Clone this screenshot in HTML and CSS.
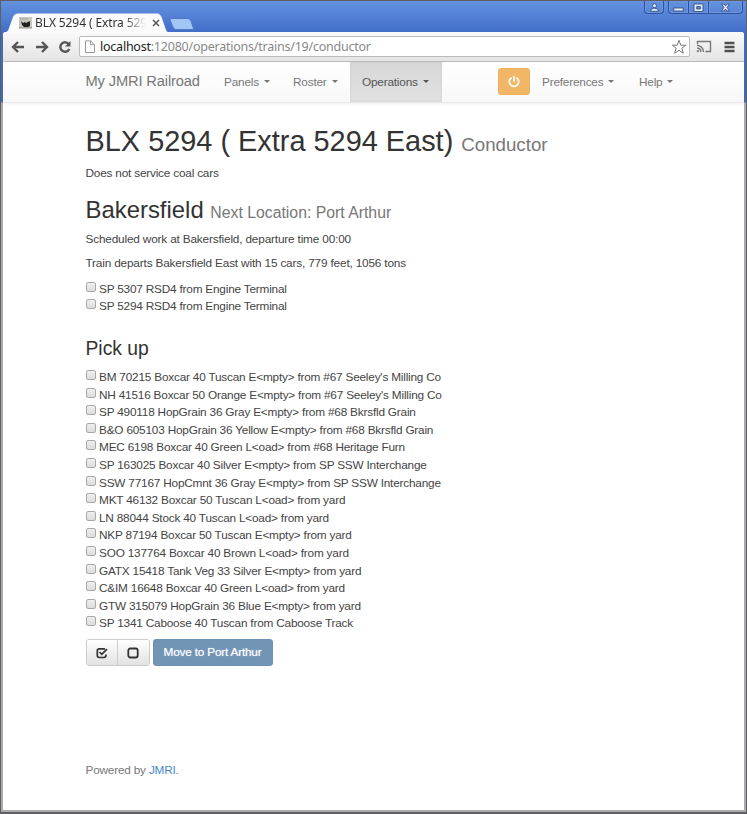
FILE: index.html
```
<!DOCTYPE html>
<html lang="en">
<head>
<meta charset="utf-8">
<title>BLX 5294 ( Extra 5294 East)</title>
<link rel="stylesheet" href="styles.css">
</head>
<body>
<div class="window">
  <div class="titlebar">
    <div class="tabs">
      <div class="tab">
        <svg class="tab-shape" width="162" height="20" viewBox="0 0 162 20"><path d="M0 20C3 19 4 18 5 15L9 4Q10.500 .5 14 .5H153Q156 .5 157.500 4L162 17Q163 19 165 20Z" fill="#fbfbfb"/></svg>
        <svg class="favicon" width="13" height="12" viewBox="0 0 13 12"><rect width="13" height="12" fill="#c9c7c0"/><path d="M2 4l2 2 2-1 1 1 4-2v5l-2 1H5L3 8z" fill="#222"/><path d="M0 10.500h13M1 2h8" stroke="#a5a39d"/></svg>
        <span class="tab-title">BLX 5294 ( Extra 529</span>
        <svg class="tab-close" width="8" height="8" viewBox="0 0 8 8"><path d="M1 1l6 6M7 1L1 7" stroke="#555" stroke-width="1.500"/></svg>
      </div>
      <svg class="newtab" width="27" height="14" viewBox="0 0 27 14"><path d="M3 1.500H20Q22 1.500 23 4L25.500 11.500Q25.500 12.500 24 12.500H8Q6 12.500 5 10L2 3Q2 1.500 3 1.500Z" fill="#a1c5f4" stroke="#4e7bc9"/></svg>
    </div>
    <div class="controls">
      <div class="ctl user"><svg width="9" height="9" viewBox="0 0 9 9"><circle cx="4.500" cy="2.700" r="2"/><path d="M.8 8.300V6.800Q4.500 3.500 8.200 6.800V8.300Z"/></svg></div>
      <div class="ctl min"><svg width="11" height="9" viewBox="0 0 11 9"><rect x=".8" y="5" width="9.400" height="3"/></svg></div>
      <div class="ctl max"><svg width="11" height="9" viewBox="0 0 11 9"><path fill-rule="evenodd" d="M1 1h9v7.500H1zM3.700 3.500h3.600v2.500H3.700z"/></svg></div>
      <div class="ctl close"><svg width="11" height="9" viewBox="0 0 11 9"><path d="M1.500 1h2.500l1.500 2L7 1h2.500L7 4.500 9.500 8H7L5.500 6 4 8H1.500L4 4.500z"/></svg></div>
    </div>
  </div>
  <div class="frame">
    <div class="toolbar">
      <svg class="nav-icon" width="14" height="14" viewBox="0 0 14 14"><path d="M13 7H2.500M7 2L2 7l5 5" /></svg>
      <svg class="nav-icon" width="14" height="14" viewBox="0 0 14 14"><path d="M1 7h10.500M7 2l5 5-5 5" /></svg>
      <svg class="nav-icon reload" width="14" height="14" viewBox="0 0 14 14"><path d="M11 4.500A4.700 4.700 0 1 0 11.300 9" /><path d="M12.500 1v5.500H7z" class="solid"/></svg>
      <div class="address">
        <svg width="10" height="13" viewBox="0 0 10 13"><path d="M.5 .9h5l4 3.800v7.800h-9zM5.500 .9V4.700h4" fill="#fff" stroke="#999"/></svg>
        <span class="url"><b>localhost</b>:12080/operations/trains/19/conductor</span>
        <svg class="star" width="16" height="16" viewBox="0 0 16 16"><path d="M8 1.300l1.800 4.900h4.900L10.900 9.200l1.400 5L8 11.300l-4.300 2.900 1.400-5L1.300 6.200h4.900z" fill="#fff" stroke="#777" stroke-linejoin="round"/></svg>
      </div>
      <svg class="cast" width="16" height="13" viewBox="0 0 16 13"><path d="M1.500 4V1.500h13v10H9.500M1 5.200a6.800 6.800 0 0 1 6.500 6.800M1 8a4 4 0 0 1 3.800 4" fill="none" stroke="#777" stroke-width="1.400"/><circle cx="1.800" cy="11.200" r="1.100" fill="#777"/></svg>
      <svg class="menu" width="11" height="12" viewBox="0 0 11 12"><path d="M.5 2h10M.5 6h10M.5 10h10" stroke="#505050" stroke-width="2.500"/></svg>
    </div>
    <nav class="navbar">
      <a class="brand">My JMRI Railroad</a>
      <a class="item panels">Panels<i class="caret"></i></a>
      <a class="item roster">Roster<i class="caret"></i></a>
      <a class="item active">Operations<i class="caret"></i></a>
      <button class="power"><svg width="12" height="12" viewBox="0 0 12 12"><path d="M3.500 1.700A4.700 4.700 0 1 0 8.500 1.700M6 0V5.500" fill="none" stroke="#fff" stroke-width="1.700"/></svg></button>
      <a class="item prefs">Preferences<i class="caret"></i></a>
      <a class="item help">Help<i class="caret"></i></a>
    </nav>
    <main>
      <h1>BLX 5294 ( Extra 5294 East) <small>Conductor</small></h1>
      <p class="desc">Does not service coal cars</p>
      <h2>Bakersfield <small>Next Location: Port Arthur</small></h2>
      <p>Scheduled work at Bakersfield, departure time 00:00</p>
      <p>Train departs Bakersfield East with 15 cars, 779 feet, 1056 tons</p>
      <ul class="engines">
        <li><i class="box"></i><span>SP 5307 RSD4 from Engine Terminal</span></li>
        <li><i class="box"></i><span>SP 5294 RSD4 from Engine Terminal</span></li>
      </ul>
      <h3>Pick up</h3>
      <ul>
        <li><i class="box"></i><span>BM 70215 Boxcar 40 Tuscan E&lt;mpty&gt; from #67 Seeley's Milling Co</span></li>
        <li><i class="box"></i><span>NH 41516 Boxcar 50 Orange E&lt;mpty&gt; from #67 Seeley's Milling Co</span></li>
        <li><i class="box"></i><span>SP 490118 HopGrain 36 Gray E&lt;mpty&gt; from #68 Bkrsfld Grain</span></li>
        <li><i class="box"></i><span>B&amp;O 605103 HopGrain 36 Yellow E&lt;mpty&gt; from #68 Bkrsfld Grain</span></li>
        <li><i class="box"></i><span>MEC 6198 Boxcar 40 Green L&lt;oad&gt; from #68 Heritage Furn</span></li>
        <li><i class="box"></i><span>SP 163025 Boxcar 40 Silver E&lt;mpty&gt; from SP SSW Interchange</span></li>
        <li><i class="box"></i><span>SSW 77167 HopCmnt 36 Gray E&lt;mpty&gt; from SP SSW Interchange</span></li>
        <li><i class="box"></i><span>MKT 46132 Boxcar 50 Tuscan L&lt;oad&gt; from yard</span></li>
        <li><i class="box"></i><span>LN 88044 Stock 40 Tuscan L&lt;oad&gt; from yard</span></li>
        <li><i class="box"></i><span>NKP 87194 Boxcar 50 Tuscan E&lt;mpty&gt; from yard</span></li>
        <li><i class="box"></i><span>SOO 137764 Boxcar 40 Brown L&lt;oad&gt; from yard</span></li>
        <li><i class="box"></i><span>GATX 15418 Tank Veg 33 Silver E&lt;mpty&gt; from yard</span></li>
        <li><i class="box"></i><span>C&amp;IM 16648 Boxcar 40 Green L&lt;oad&gt; from yard</span></li>
        <li><i class="box"></i><span>GTW 315079 HopGrain 36 Blue E&lt;mpty&gt; from yard</span></li>
        <li><i class="box"></i><span>SP 1341 Caboose 40 Tuscan from Caboose Track</span></li>
      </ul>
      <div class="actions">
        <div class="group">
          <button><svg width="12" height="12" viewBox="0 0 12 12"><path d="M9 1.800H3.200Q1.300 1.800 1.300 3.700V8.600Q1.300 10.500 3.200 10.500H8Q9.900 10.500 9.900 8.600V7.500M3.500 5l2.300 2.300L11 2.200" fill="none" stroke="#333" stroke-width="1.700"/></svg></button>
          <button><svg width="12" height="12" viewBox="0 0 12 12"><rect x="1.300" y="1.500" width="9.400" height="9" rx="2" fill="none" stroke="#333" stroke-width="1.800"/></svg></button>
        </div>
        <button class="move">Move to Port Arthur</button>
      </div>
      <footer>Powered by <a>JMRI</a>.</footer>
    </main>
  </div>
</div>
</body>
</html>
```
FILE: styles.css
```
* { box-sizing: border-box; }
body { margin: 0; font: 11.8px/17.6px "Liberation Sans", Arial, sans-serif; letter-spacing: -.2px; color: #444; }
h1, h2, h3, p, ul { margin: 0; padding: 0; font-weight: normal; white-space: nowrap; }
h1, h2, h3 { letter-spacing: 0; color: #333; }
svg { display: block; flex: none; overflow: visible; }
button { margin: 0; padding: 0; font: inherit; letter-spacing: inherit; display: flex; align-items: center; justify-content: center; }
.window { width: 747px; height: 814px; overflow: hidden; border: 1px solid #5f5f63; border-bottom-width: 2px; background: linear-gradient(#6492df 0, #416dc8 32px, #3f68b5 101px, #ababab 102px); }
.titlebar { height: 31px; display: flex; justify-content: space-between; align-items: flex-start; }
.tabs { display: flex; padding: 12px 0 0 3px; }
.tab { display: flex; align-items: center; position: relative; width: 162px; height: 20px; padding-left: 15px; font: 12px/18px "Noto Sans", sans-serif; color: #333; }
.tab-shape { position: absolute; left: 0; top: 0; }
.favicon, .tab-title, .tab-close { position: relative; }
.tab-title { width: 112px; margin-left: 3px; white-space: nowrap; letter-spacing: -.1px; -webkit-mask-image: linear-gradient(90deg, #000 80%, transparent 99%); mask-image: linear-gradient(90deg, #000 80%, transparent 99%); }
.tab-close { margin-left: 5px; }
.newtab { margin: 4px 0 0 2px; }
.controls { display: flex; padding-right: 3px; }
.ctl { height: 13px; border: 1px solid #2d539f; border-top: 0; display: flex; align-items: center; justify-content: center; box-shadow: inset 0 0 0 1px #6f96dc; }
.ctl svg { fill: #e4ebf6; stroke: #27467f; stroke-width: .8; }
.user { width: 20px; border-radius: 0 0 4px 4px; margin-right: 4px; }
.min { width: 21px; border-radius: 0 0 0 4px; }
.max { width: 20px; border-left: 0; }
.close { width: 34px; border-left: 0; border-radius: 0 0 4px 0; }
.frame { margin: 0 2px; height: 778px; background: #fff; border-radius: 3px 3px 0 0; overflow: hidden; }
.toolbar { display: flex; align-items: center; height: 30px; padding: 0 9px 0 8px; background: linear-gradient(#fafafa, #e4e4e4); border-bottom: 1px solid #bdbdbd; }
.nav-icon { margin-right: 10px; fill: none; stroke: #555; stroke-width: 2.400; }
.nav-icon .solid { fill: #555; stroke: none; }
.reload { margin-left: -1px; }
.address { display: flex; align-items: center; width: 611px; height: 21px; margin-left: -3px; padding: 0 2px 0 5px; background: #fff; border: 1px solid #bbb; border-radius: 2px; }
.url { flex: 1; margin-left: 5px; font: 12.500px/18px "Noto Sans", sans-serif; letter-spacing: -.23px; color: #888; white-space: nowrap; }
.url b { font-weight: normal; color: #222; }
.cast { margin-left: 6px; }
.menu { margin-left: 12px; }
.navbar { display: flex; height: 41px; padding-left: 82.500px; line-height: 40px; color: #777; background: linear-gradient(#fff, #f8f8f8); border-bottom: 1px solid #e7e7e7; box-shadow: 0 1px 3px rgba(0,0,0,.06); white-space: nowrap; }
.brand { width: 138.500px; font-size: 14.700px; line-height: 39px; letter-spacing: -.15px; }
.item { display: flex; align-items: center; height: 39px; }
.caret { margin-left: 5px; border: 3.500px solid transparent; border-top-color: currentColor; border-bottom: 0; }
.panels { width: 69px; }
.roster { width: 57px; }
.item.active { width: 92px; height: 40px; padding: 0 0 1px 12px; color: #555; background: linear-gradient(#d8d8d8, #e1e1e1); box-shadow: inset 0 0 3px rgba(0,0,0,.08); }
.power { width: 32px; height: 27px; margin: 6px 12px 0 56px; border: 1px solid #eeb058; border-radius: 3px; background: #f1b766; }
.prefs { width: 97px; }
main { padding: 20px 0 0 82.500px; }
h1 { height: 41.500px; font-size: 28.900px; line-height: 36px; }
h2 { height: 35.500px; font-size: 23.900px; line-height: 28px; }
h3 { height: 32px; margin-top: 21px; font-size: 19.300px; line-height: 24px; }
small { color: #777; }
h1 small { font-size: 18.700px; }
h2 small { font-size: 15.800px; }
p { margin-bottom: 6.500px; letter-spacing: -.17px; }
.desc { margin-bottom: 13.500px; letter-spacing: -.2px; }
ul { list-style: none; }
.engines { margin-top: 8px; }
li { display: flex; height: 17.600px; }
.box { width: 10px; height: 10px; margin: 1px 3.500px 0 0; border: 1px solid #aaa; border-radius: 2px; background: linear-gradient(#eee, #ddd); }
.actions { display: flex; gap: 3px; margin: 6.500px 0 0 0; }
.group { display: flex; width: 64px; height: 27px; border: 1px solid #ccc; border-radius: 3px; overflow: hidden; }
.group button { flex: 1; border: 0; background: linear-gradient(#fff, #e2e2e2); }
.group button + button { border-left: 1px solid #ccc; }
.move { width: 120px; height: 27px; border: 1px solid #6d91b4; border-radius: 3px; background: #7295b6; color: #fff; text-shadow: 0 0 1px rgba(255,255,255,.6); }
footer { margin-top: 95.500px; color: #777; }
footer a { color: #428bca; }
```
